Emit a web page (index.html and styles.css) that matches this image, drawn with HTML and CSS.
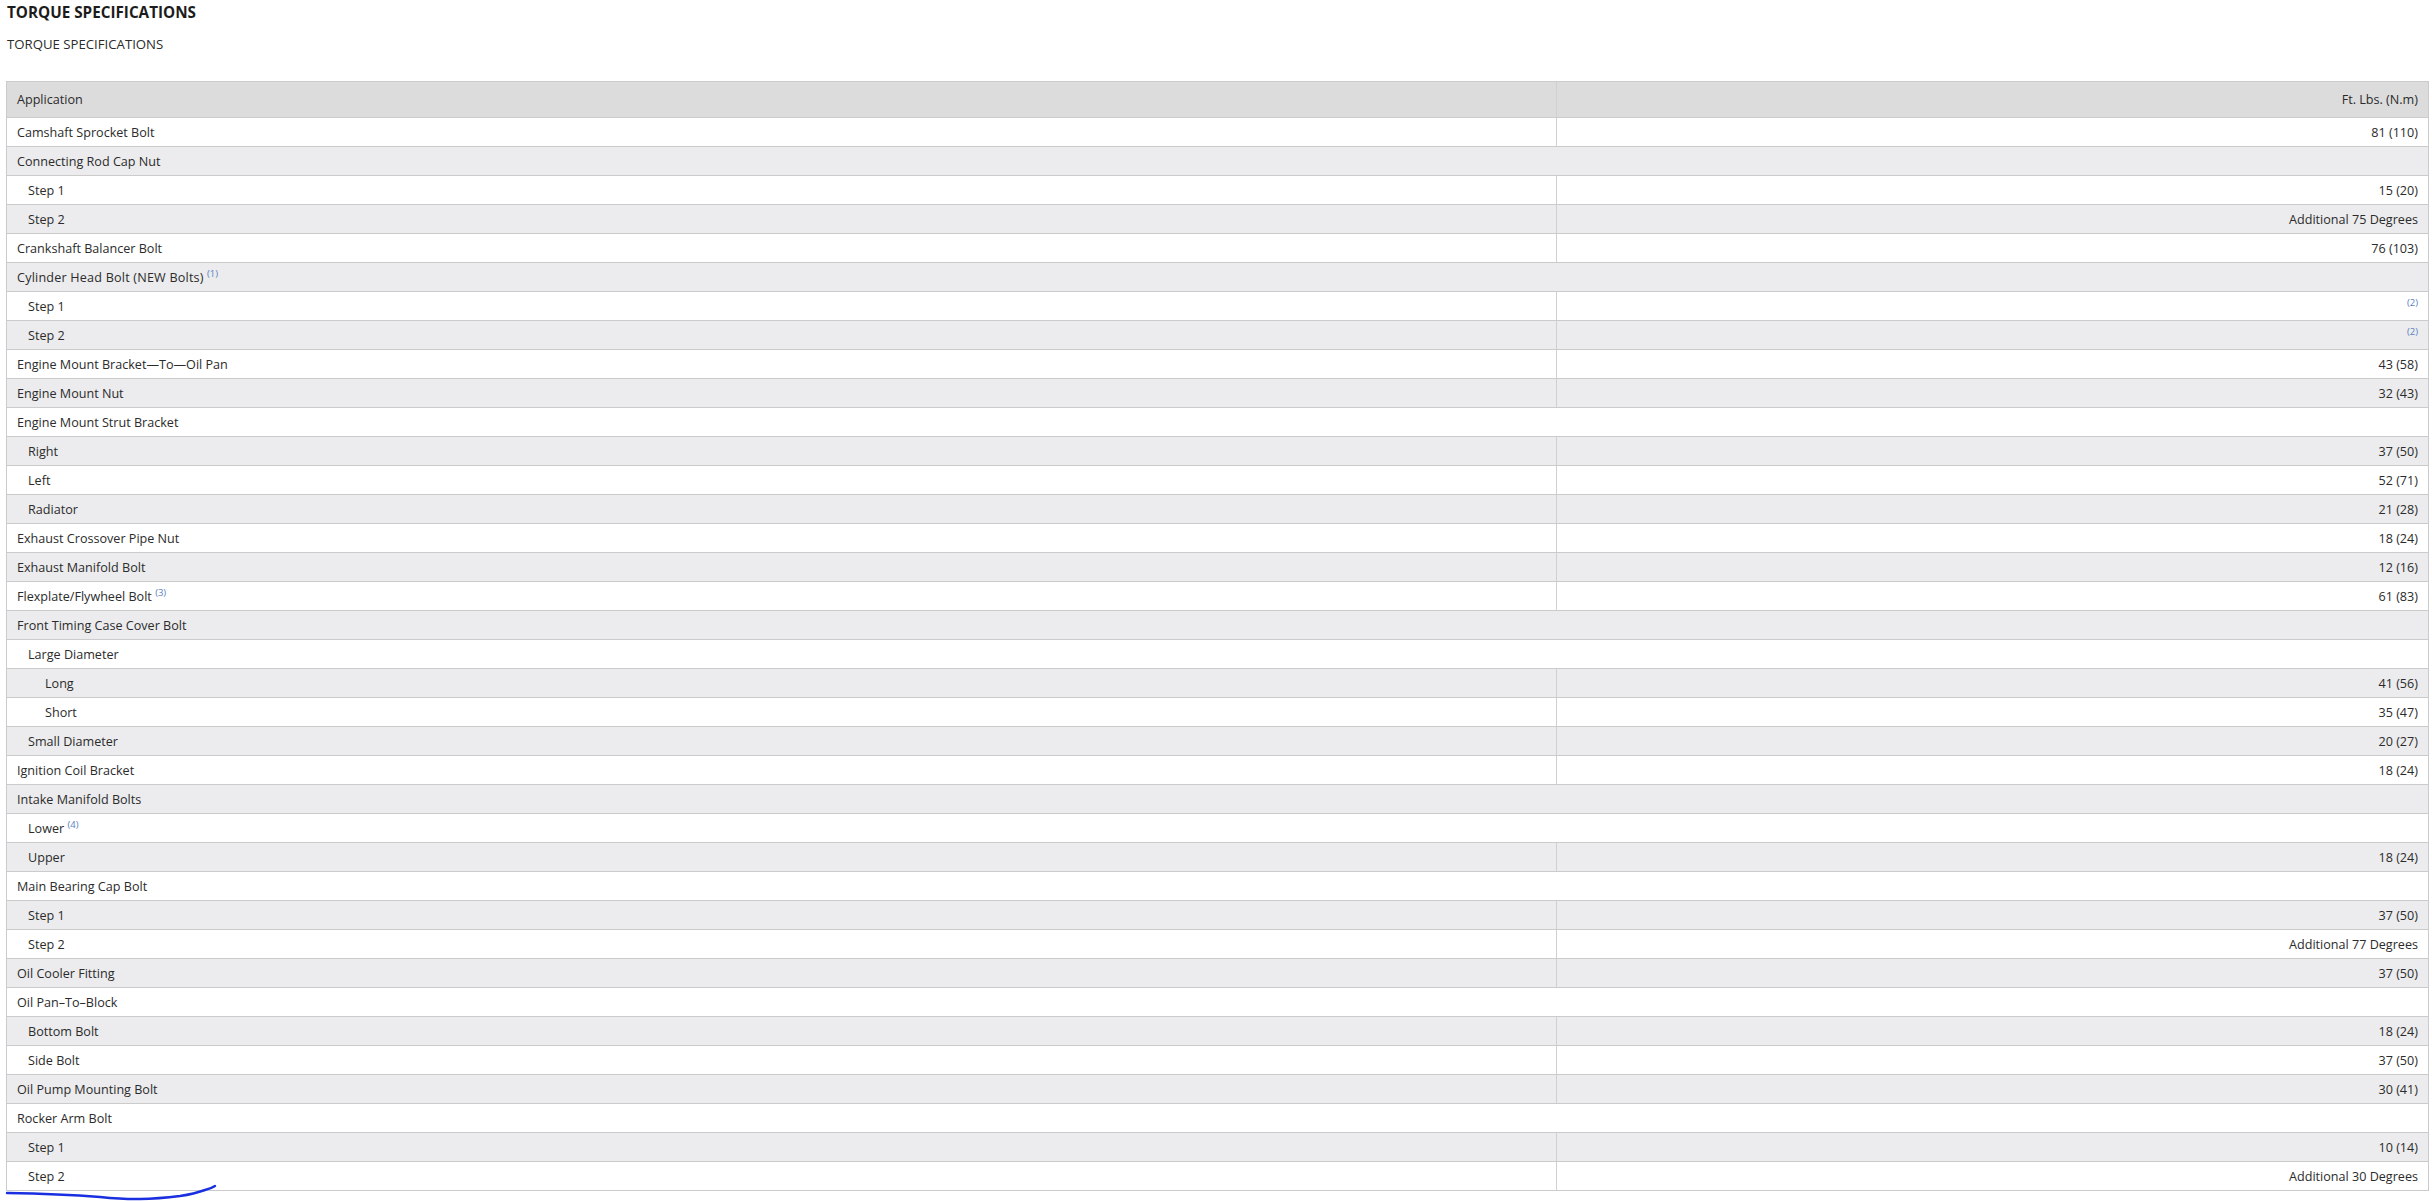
FILE: index.html
```html
<!DOCTYPE html>
<html>
<head>
<meta charset="utf-8">
<title>Torque Specifications</title>
<link rel="stylesheet" href="styles.css">
</head>
<body>
<div class="page">
  <h1 class="title">TORQUE SPECIFICATIONS</h1>
  <p class="subtitle">TORQUE SPECIFICATIONS</p>
  <table class="spec">
    <thead>
      <tr><th class="app">Application</th><th class="val">Ft. Lbs. (N.m)</th></tr>
    </thead>
    <tbody>
      <tr><td class="app">Camshaft Sprocket Bolt</td><td class="val">81 (110)</td></tr>
      <tr><td class="app" colspan="2">Connecting Rod Cap Nut</td></tr>
      <tr><td class="app l2">Step 1</td><td class="val">15 (20)</td></tr>
      <tr><td class="app l2">Step 2</td><td class="val">Additional 75 Degrees</td></tr>
      <tr><td class="app">Crankshaft Balancer Bolt</td><td class="val">76 (103)</td></tr>
      <tr><td class="app" colspan="2"><span class="caps">Cylinder Head Bolt (NEW Bolts)</span> <sup class="note">(1)</sup></td></tr>
      <tr><td class="app l2">Step 1</td><td class="val"><sup class="note">(2)</sup></td></tr>
      <tr><td class="app l2">Step 2</td><td class="val"><sup class="note">(2)</sup></td></tr>
      <tr><td class="app">Engine Mount Bracket—To—Oil Pan</td><td class="val">43 (58)</td></tr>
      <tr><td class="app">Engine Mount Nut</td><td class="val">32 (43)</td></tr>
      <tr><td class="app" colspan="2">Engine Mount Strut Bracket</td></tr>
      <tr><td class="app l2">Right</td><td class="val">37 (50)</td></tr>
      <tr><td class="app l2">Left</td><td class="val">52 (71)</td></tr>
      <tr><td class="app l2">Radiator</td><td class="val">21 (28)</td></tr>
      <tr><td class="app">Exhaust Crossover Pipe Nut</td><td class="val">18 (24)</td></tr>
      <tr><td class="app">Exhaust Manifold Bolt</td><td class="val">12 (16)</td></tr>
      <tr><td class="app">Flexplate/Flywheel Bolt <sup class="note">(3)</sup></td><td class="val">61 (83)</td></tr>
      <tr><td class="app" colspan="2">Front Timing Case Cover Bolt</td></tr>
      <tr><td class="app l2" colspan="2">Large Diameter</td></tr>
      <tr><td class="app l3">Long</td><td class="val">41 (56)</td></tr>
      <tr><td class="app l3">Short</td><td class="val">35 (47)</td></tr>
      <tr><td class="app l2">Small Diameter</td><td class="val">20 (27)</td></tr>
      <tr><td class="app">Ignition Coil Bracket</td><td class="val">18 (24)</td></tr>
      <tr><td class="app" colspan="2">Intake Manifold Bolts</td></tr>
      <tr><td class="app l2" colspan="2">Lower <sup class="note">(4)</sup></td></tr>
      <tr><td class="app l2">Upper</td><td class="val">18 (24)</td></tr>
      <tr><td class="app" colspan="2">Main Bearing Cap Bolt</td></tr>
      <tr><td class="app l2">Step 1</td><td class="val">37 (50)</td></tr>
      <tr><td class="app l2">Step 2</td><td class="val">Additional 77 Degrees</td></tr>
      <tr><td class="app">Oil Cooler Fitting</td><td class="val">37 (50)</td></tr>
      <tr><td class="app" colspan="2">Oil Pan–To–Block</td></tr>
      <tr><td class="app l2">Bottom Bolt</td><td class="val">18 (24)</td></tr>
      <tr><td class="app l2">Side Bolt</td><td class="val">37 (50)</td></tr>
      <tr><td class="app">Oil Pump Mounting Bolt</td><td class="val">30 (41)</td></tr>
      <tr><td class="app" colspan="2">Rocker Arm Bolt</td></tr>
      <tr><td class="app l2">Step 1</td><td class="val">10 (14)</td></tr>
      <tr><td class="app l2">Step 2</td><td class="val">Additional 30 Degrees</td></tr>
    </tbody>
  </table>
  <svg class="scribble" width="230" height="21" viewBox="0 0 230 21">
    <path d="M7 13 C 40 13.5, 75 15, 100 17 C 115 18.5, 128 19.2, 140 19 C 155 18.8, 168 17.5, 180 16 C 190 14.5, 198 12.5, 205 10 C 209 9, 212 8, 215 6" fill="none" stroke="#1a2fe0" stroke-width="2.4" stroke-linecap="round" stroke-linejoin="round"/>
  </svg>
</div>
</body>
</html>
```

FILE: styles.css
```css
html, body {
  margin: 0;
  padding: 0;
  background: #ffffff;
}
body {
  font-family: "Open Sans", "Noto Sans", "Liberation Sans", sans-serif;
  color: #2b2b2b;
}
.page {
  position: relative;
  box-sizing: border-box;
  min-height: 1201px;
  padding: 0 3px 0 6px;
}
.title {
  margin: 0;
  padding: 2px 0 0 1px;
  font-size: 15.25px;
  line-height: 20px;
  font-weight: bold;
  color: #1c1c1c;
}
.subtitle {
  margin: 0;
  padding: 14px 0 0 1px;
  font-size: 13.2px;
  line-height: 17px;
  color: #2b2b2b;
}
.spec {
  margin-top: 28px;
  width: 100%;
  border-collapse: collapse;
  border: 1px solid #cbcbcb;
  font-size: 12.6px;
}
.spec th, .spec td {
  border-top: 1px solid #cbcbcb;
  border-bottom: 1px solid #cbcbcb;
  padding: 0 10px;
  text-align: left;
  font-weight: normal;
}
.spec th {
  height: 35px;
  background: #dcdcdc;
  color: #2b2b2b;
}
.spec td {
  height: 28px;
}
.spec th.app, .spec td.app {
  width: 64%;
}
.spec td.app[colspan] {
  width: auto;
}
.spec .val {
  text-align: right;
  border-left: 1px solid #d0d0d0;
}
.spec tbody tr:nth-child(odd) td {
  background: #ffffff;
}
.spec tbody tr:nth-child(even) td {
  background: #ececee;
}
.spec td.l2 {
  padding-left: 21px;
}
.spec td.l3 {
  padding-left: 38px;
}
.caps {
  letter-spacing: 0.2px;
}
.note {
  font-size: 9.5px;
  color: #5a7fc0;
  vertical-align: 5px;
  line-height: 0;
}
.scribble {
  position: absolute;
  left: 0;
  top: 1180px;
}
```
